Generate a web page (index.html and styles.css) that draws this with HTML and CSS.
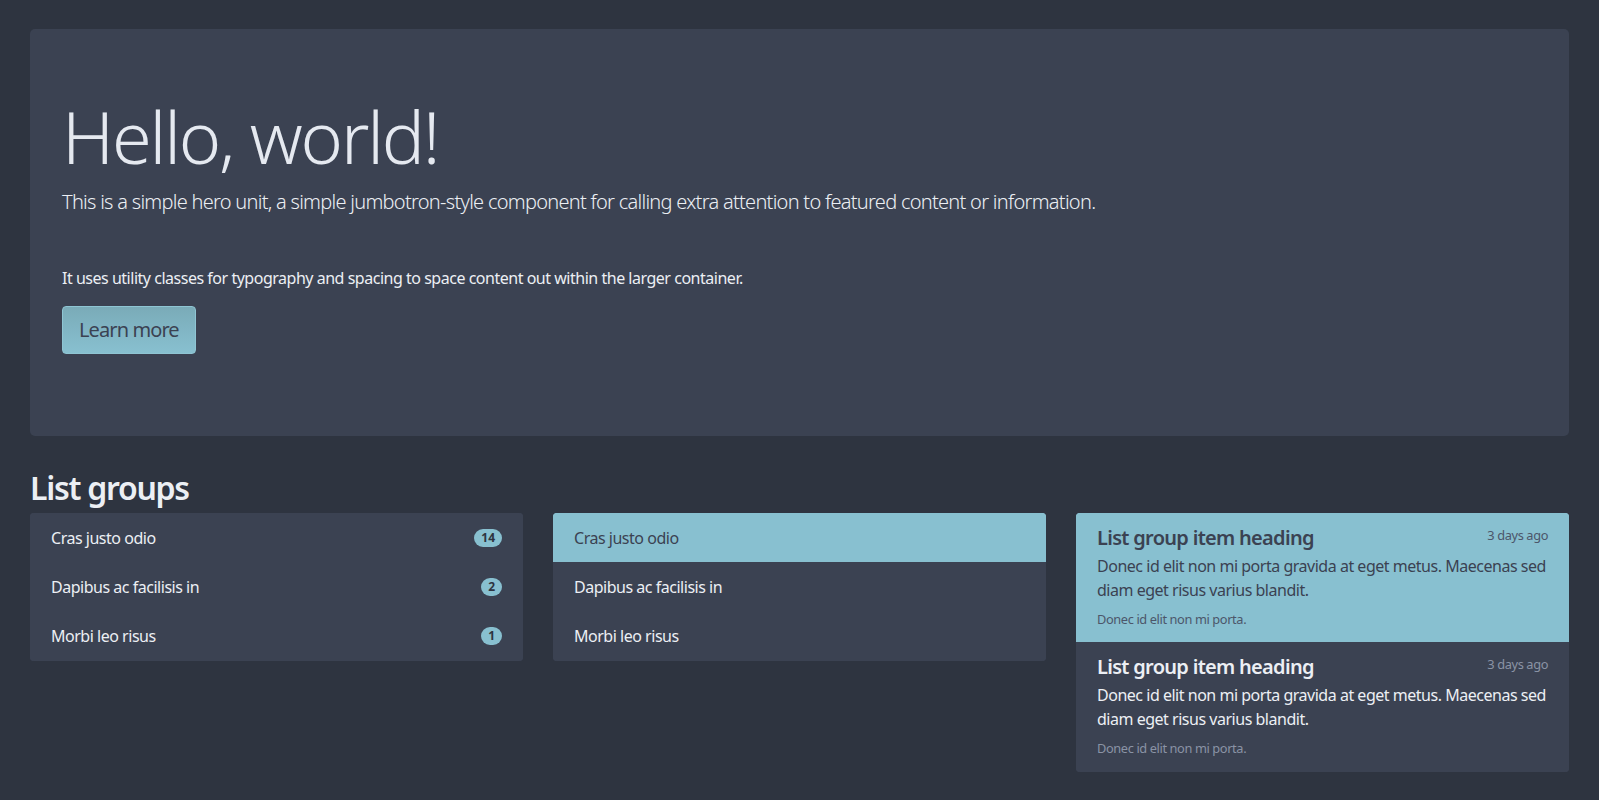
FILE: index.html
```html
<!DOCTYPE html>
<html lang="en">
<head>
<meta charset="utf-8">
<title>Hero and list groups</title>
<link rel="stylesheet" href="styles.css">
</head>
<body>
<div class="container">
  <section class="jumbotron">
    <h1 class="display">Hello, world!</h1>
    <p class="lead">This is a simple hero unit, a simple jumbotron-style component for calling extra attention to featured content or information.</p>
    <hr class="divider">
    <p class="body-text">It uses utility classes for typography and spacing to space content out within the larger container.</p>
    <p class="lead"><a class="btn" href="#">Learn more</a></p>
  </section>

  <h2 class="section-title">List groups</h2>
  <div class="columns">
    <ul class="list-group">
      <li class="list-item between">Cras justo odio <span class="badge">14</span></li>
      <li class="list-item between">Dapibus ac facilisis in <span class="badge">2</span></li>
      <li class="list-item between">Morbi leo risus <span class="badge">1</span></li>
    </ul>
    <div class="list-group">
      <a class="list-item active" href="#">Cras justo odio</a>
      <a class="list-item" href="#">Dapibus ac facilisis in</a>
      <a class="list-item" href="#">Morbi leo risus</a>
    </div>
    <div class="list-group">
      <a class="list-item active" href="#">
        <div class="item-head">
          <h5 class="item-title">List group item heading</h5>
          <small class="muted">3 days ago</small>
        </div>
        <p class="item-text">Donec id elit non mi porta gravida at eget metus. Maecenas sed diam eget risus varius blandit.</p>
        <small class="muted">Donec id elit non mi porta.</small>
      </a>
      <a class="list-item" href="#">
        <div class="item-head">
          <h5 class="item-title">List group item heading</h5>
          <small class="muted">3 days ago</small>
        </div>
        <p class="item-text">Donec id elit non mi porta gravida at eget metus. Maecenas sed diam eget risus varius blandit.</p>
        <small class="muted">Donec id elit non mi porta.</small>
      </a>
    </div>
  </div>
</div>
</body>
</html>
```
FILE: styles.css
```css
* {
  box-sizing: border-box;
  letter-spacing: -0.03em;
}

html, body {
  margin: 0;
  padding: 0;
}

body {
  background: #2e3440;
  color: #eceff4;
  font-family: "Noto Sans", "Open Sans", sans-serif;
  font-size: 16px;
  line-height: 1.5;
}

.container {
  padding: 29px 30px 30px;
}

.jumbotron {
  background: #3b4252;
  border-radius: 5px;
  padding: 64px 32px 66px;
  margin-bottom: 33px;
}

.display {
  margin: 0 0 8px;
  font-size: 72px;
  font-weight: 300;
  line-height: 1.2;
  color: #e5e9f0;
}

.lead {
  margin: 0 0 16px;
  font-size: 20px;
  font-weight: 300;
  line-height: 1.5;
  letter-spacing: -0.036em;
}

.divider {
  margin: 24px 0;
  height: 0;
  border: 0;
  border-top: 1px solid transparent;
}

.body-text {
  margin: 0 0 16px;
}

.btn {
  display: inline-block;
  padding: 8px 16px;
  font-size: 20px;
  font-weight: 400;
  line-height: 1.5;
  letter-spacing: -0.045em;
  color: #3b4252;
  text-decoration: none;
  background: linear-gradient(#7aabb8, #88c0d0);
  border: 1px solid #8fc5d3;
  border-radius: 4px;
  vertical-align: middle;
}

.section-title {
  margin: 0 0 5px;
  font-size: 32px;
  font-weight: 600;
  line-height: 1.2;
  letter-spacing: -0.04em;
  color: #eceff4;
}

.columns {
  display: grid;
  grid-template-columns: repeat(3, 1fr);
  gap: 30px;
  align-items: start;
}

.list-group {
  display: flex;
  flex-direction: column;
  margin: 0;
  padding: 0;
  list-style: none;
  background: #3b4252;
  border-radius: 4px;
  overflow: hidden;
}

.list-item {
  display: block;
  padding: 12px 20px;
  color: #eceff4;
  text-decoration: none;
  border: 1px solid #3b4252;
  margin-bottom: -1px;
  background: #3b4252;
}

.list-item:last-child { margin-bottom: 0; }

.list-item.active {
  background: #88c0d0;
  border-color: #88c0d0;
  color: #3b4252;
}

.between {
  display: flex;
  justify-content: space-between;
  align-items: center;
}

.badge {
  display: inline-block;
  padding: 3px 7px;
  font-size: 12px;
  font-weight: 700;
  line-height: 1;
  color: #2e3440;
  background: #88c0d0;
  border-radius: 10rem;
  letter-spacing: 0;
}

.item-head {
  display: flex;
  justify-content: space-between;
}

.item-title {
  margin: 0 0 4px;
  font-size: 20px;
  font-weight: 600;
  line-height: 1.2;
  letter-spacing: -0.035em;
}

.item-text {
  margin: 0 0 4px;
}

.muted {
  font-size: 80%;
  color: #8a93a5;
}

.list-item.active .muted {
  color: #4c566a;
}
```
